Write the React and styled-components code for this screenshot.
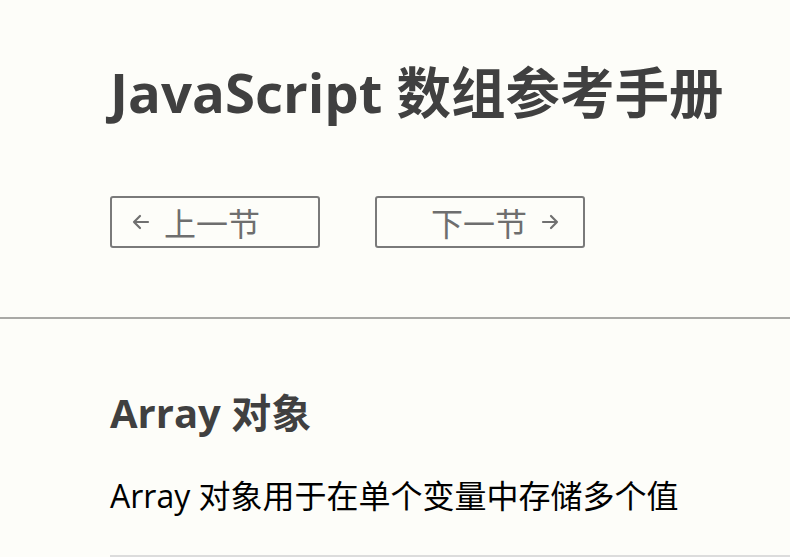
import styled, { createGlobalStyle } from 'styled-components'

const GlobalStyle = createGlobalStyle`
  html, body {
    margin: 0;
    padding: 0;
    background: #fdfdf9;
  }
  body {
    font-family: "Open Sans", "Noto Sans CJK SC", sans-serif;
  }
`

const Header = styled.header`
  padding: 54px 0 69px 110px;
  border-bottom: 2px solid #a9a9a6;
`

const Title = styled.h1`
  margin: 0;
  font-size: 54.5px;
  font-weight: 700;
  line-height: 76px;
  color: #404040;
`

const Nav = styled.nav`
  display: flex;
  gap: 55px;
  margin-top: 66px;
`

const NavButton = styled.a`
  box-sizing: border-box;
  width: 210px;
  height: 52px;
  display: flex;
  align-items: center;
  justify-content: ${(p) => (p.$next ? 'flex-end' : 'flex-start')};
  gap: 12px;
  padding: 0 22px 0 18px;
  border: 2px solid #7a7a7a;
  border-radius: 3px;
  color: #6e6e6e;
  font-size: 32px;
  font-weight: 400;
  text-decoration: none;
  cursor: pointer;
`

const Arrow = styled.svg`
  width: 22px;
  height: 22px;
  flex: none;
`

const Main = styled.main`
  padding: 66px 0 0 110px;
`

const SubTitle = styled.h2`
  margin: 0;
  font-size: 40px;
  font-weight: 700;
  line-height: 56px;
  color: #404040;
`

const Text = styled.p`
  margin: 33px 0 0;
  font-size: 32px;
  line-height: 44px;
  color: #000;
`

const Divider = styled.hr`
  margin: 37px 0 0;
  border: 0;
  border-top: 2px solid #dcdcdc;
`

function LeftArrow() {
  return (
    <Arrow viewBox="0 0 22 22" fill="none" stroke="#707070" strokeWidth="2.2" strokeLinecap="round" strokeLinejoin="round">
      <path d="M18 11H4M10 5l-6 6 6 6" />
    </Arrow>
  )
}

function RightArrow() {
  return (
    <Arrow viewBox="0 0 22 22" fill="none" stroke="#707070" strokeWidth="2.2" strokeLinecap="round" strokeLinejoin="round">
      <path d="M4 11h14M12 5l6 6-6 6" />
    </Arrow>
  )
}

export default function App() {
  return (
    <>
      <GlobalStyle />
      <Header>
        <Title>JavaScript 数组参考手册</Title>
        <Nav>
          <NavButton>
            <LeftArrow />
            上一节
          </NavButton>
          <NavButton $next>
            下一节
            <RightArrow />
          </NavButton>
        </Nav>
      </Header>
      <Main>
        <SubTitle>Array 对象</SubTitle>
        <Text>Array 对象用于在单个变量中存储多个值</Text>
        <Divider />
      </Main>
    </>
  )
}
